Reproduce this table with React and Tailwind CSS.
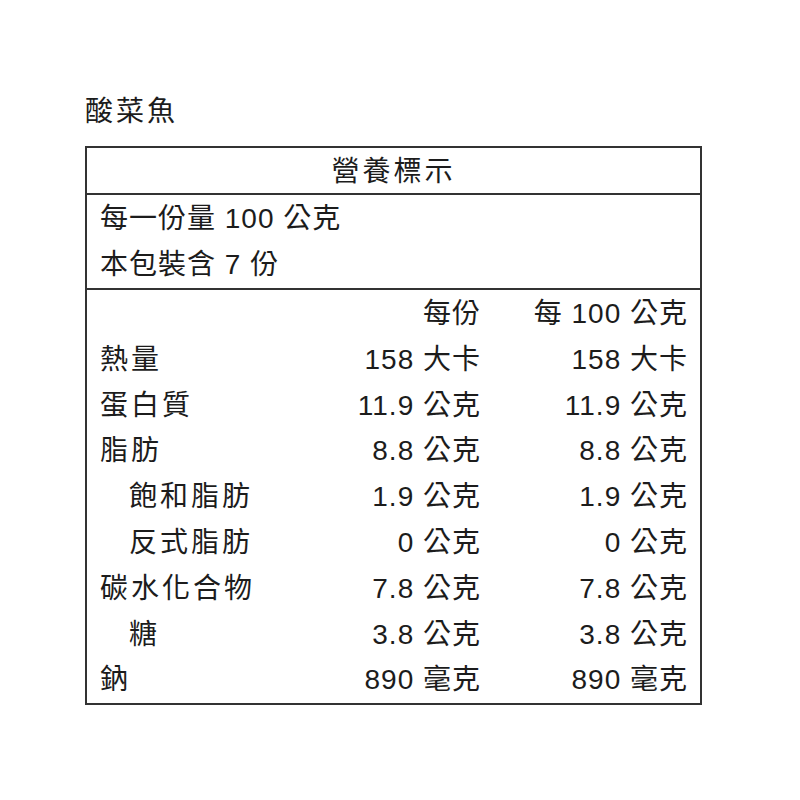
import React from "react";

const rows = [
  { name: "熱量", perServing: "158 大卡", per100: "158 大卡" },
  { name: "蛋白質", perServing: "11.9 公克", per100: "11.9 公克" },
  { name: "脂肪", perServing: "8.8 公克", per100: "8.8 公克" },
  { name: "飽和脂肪", perServing: "1.9 公克", per100: "1.9 公克", indent: true },
  { name: "反式脂肪", perServing: "0 公克", per100: "0 公克", indent: true },
  { name: "碳水化合物", perServing: "7.8 公克", per100: "7.8 公克" },
  { name: "糖", perServing: "3.8 公克", per100: "3.8 公克", indent: true },
  { name: "鈉", perServing: "890 毫克", per100: "890 毫克" },
];

const App = () => {
  return (
    <div
      className="min-h-[800px] bg-white pt-[92px] pl-[85px] text-[#1c1c1c]"
      style={{ fontFamily: '"Liberation Sans", "Noto Sans CJK TC", sans-serif' }}
    >
      <h1 className="text-[28px] leading-[40px] tracking-[3px]">酸菜魚</h1>
      <div className="mt-[14px] w-[617px] border-2 border-[#333] text-[28px]">
        <div className="h-[47px] pt-[2px] flex items-center justify-center border-b-2 border-[#333] tracking-[3px]">
          營養標示
        </div>
        <div className="border-b-2 border-[#333] pl-[13px] pt-[1px] leading-[46px] tracking-[1px]">
          <div>每一份量 100 公克</div>
          <div>本包裝含 7 份</div>
        </div>
        <div className="grid grid-cols-[1fr_180px_207px] pl-[13px] pr-[12px] pt-[1px] leading-[45.8px]">
          <div></div>
          <div className="text-right tracking-[1px]">每份</div>
          <div className="text-right tracking-[1px]">每 100 公克</div>
          {rows.map((row) => (
            <React.Fragment key={row.name}>
              <div className={row.indent ? "pl-[29px] tracking-[3px]" : "tracking-[3px]"}>
                {row.name}
              </div>
              <div className="text-right tracking-[1px]">{row.perServing}</div>
              <div className="text-right tracking-[1px]">{row.per100}</div>
            </React.Fragment>
          ))}
        </div>
      </div>
    </div>
  );
};

export default App;
